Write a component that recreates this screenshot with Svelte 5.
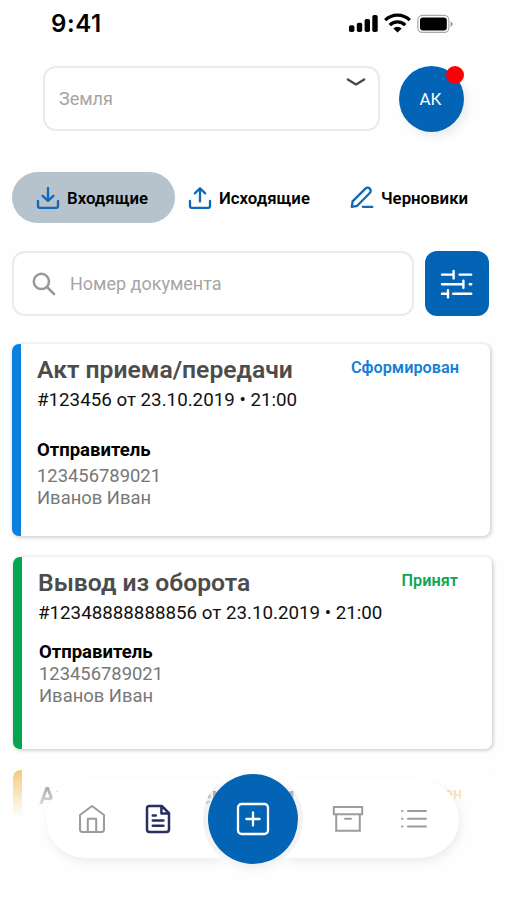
<script>
	const tabs = [
		{ id: "inbox", label: "Входящие" },
		{ id: "outbox", label: "Исходящие" },
		{ id: "drafts", label: "Черновики" },
	];

	const documents = [
		{
			title: "Акт приема/передачи",
			info: "#123456 от 23.10.2019 • 21:00",
			status: "Сформирован",
			kind: "formed",
			code: "123456789021",
			sender: "Иванов Иван",
		},
		{
			title: "Вывод из оборота",
			info: "#12348888888856 от 23.10.2019 • 21:00",
			status: "Принят",
			kind: "accepted",
			code: "123456789021",
			sender: "Иванов Иван",
		},
		{
			title: "Акт приема/передачи",
			status: "Отклонен",
			kind: "declined",
		},
	];

	let currentTab = $state("inbox");
	let query = $state("");
</script>

<div class="screen">
	<div class="statusbar">
		<span class="time">9:41</span>
		<svg class="system" width="106" height="22" viewBox="0 0 106 22">
			<rect x="1" y="14.2" width="5.4" height="6.8" rx="1.8" />
			<rect x="8.8" y="11.8" width="5.4" height="9.2" rx="1.8" />
			<rect x="16.6" y="8" width="5.4" height="13" rx="1.8" />
			<rect x="24.3" y="4" width="5.4" height="17" rx="1.8" />
			<g fill="none" stroke="#000" stroke-width="3.3">
				<path d="M37.2 9.2a17.5 17.5 0 0 1 24.6 0" />
				<path d="M41.8 14.2a10.8 10.8 0 0 1 15.4 0" />
			</g>
			<path d="M49.5 21.6l-4.2-4.2a6.2 6.2 0 0 1 8.4 0z" />
			<rect x="69.9" y="4.4" width="31" height="17" rx="4.6" fill="none" stroke="#aaa" stroke-width="1.2" />
			<rect x="72" y="6.5" width="26.8" height="12.9" rx="3" />
			<path d="M102.6 10.6c2.6.8 2.6 4.4 0 5.2z" fill="#999" />
		</svg>
	</div>

	<header>
		<button class="select">
			<span>Земля</span>
			<svg width="20" height="10" viewBox="0 0 20 10">
				<path d="M1.8 2.4L10 7.4L18.2 2.4" fill="none" stroke="#484848" stroke-width="2.3" stroke-linecap="round" stroke-linejoin="round" />
			</svg>
		</button>
		<div class="avatar">
			АК
			<i class="badge"></i>
		</div>
	</header>

	<nav class="tabs">
		{#each tabs as tab}
			<button class="tab {tab.id}" class:active={currentTab === tab.id} onclick={() => (currentTab = tab.id)}>
				<svg width="24" height="24" viewBox="0 0 24 24">
					{#if tab.id === "inbox"}
						<path d="M2 15v5q0 1.8 1.8 1.8h16.4q1.8 0 1.8-1.8V15M12 2v12.6M6.6 9.8L12 14.8l5.4-5" />
					{:else if tab.id === "outbox"}
						<path d="M2 15v5q0 1.8 1.8 1.8h16.4q1.8 0 1.8-1.8V15M12 15.5V2.4M6.8 7.4L12 2.2l5.2 5.2" />
					{:else}
						<path d="M1.8 20.8l.8-5.4L15.4 2.6a3.1 3.1 0 0 1 4.4 4.4L7.2 19.8zM12.8 20.8h9.6" />
					{/if}
				</svg>
				{tab.label}
			</button>
		{/each}
	</nav>

	<div class="search">
		<label>
			<svg width="24" height="24" viewBox="0 0 24 24">
				<circle cx="9.4" cy="9.4" r="7.6" />
				<path d="M15 15l7 7" />
			</svg>
			<input type="text" placeholder="Номер документа" bind:value={query} />
		</label>
		<button class="filter" aria-label="Фильтр">
			<svg width="34" height="30" viewBox="0 0 34 30">
				<path d="M2 5.6h11.5M13.6 2v7.4M19.6 5.6H31.2M2 15.2h21.4M23.4 11.6v7.2M29.8 15.2h1.4M2 24.8h5M8 21.2v7.2M13.2 24.8h18" />
			</svg>
		</button>
	</div>

	<main>
		{#each documents as doc}
			<article class={doc.kind}>
				<div class="top">
					<h2>{doc.title}</h2>
					<span class="status">{doc.status}</span>
				</div>
				{#if doc.info}
					<p class="info">{doc.info}</p>
					<h3>Отправитель</h3>
					<p class="sender">{doc.code}</p>
					<p class="sender">{doc.sender}</p>
				{/if}
			</article>
		{/each}
	</main>

	<footer>
		<div class="bar">
			<svg class="home" width="28" height="30" viewBox="0 0 28 30">
				<path d="M2 11L14 2l12 9v14.6q0 2.4-2.4 2.4H4.4Q2 28 2 25.6zM9.8 28V14.8h8.4V28" />
			</svg>
			<svg class="file" width="26" height="30" viewBox="0 0 26 30">
				<path d="M4.4 2h12.4L24 9.2v16.4q0 2.4-2.4 2.4H4.4Q2 28 2 25.6V4.4Q2 2 4.4 2zM16.4 2.4v7.2h7.2M7.8 11.4h3M7.8 16.6h10.6M7.8 21.8h10.6" />
			</svg>
			<span class="space"></span>
			<svg class="archive" width="32" height="28" viewBox="0 0 32 28">
				<path d="M1.8 2h28.4v7.2H1.8zM4.2 9.2v16.6h23.6V9.2M13 13.8h6" />
			</svg>
			<svg class="list" width="28" height="20" viewBox="0 0 28 20">
				<path d="M2 2h.4M8 2h18M2 9.8h.4M8 9.8h18M2 17.6h.4M8 17.6h18" />
			</svg>
		</div>
		<button class="add" aria-label="Добавить">
			<svg width="34" height="34" viewBox="0 0 34 34">
				<rect x="2" y="2" width="30" height="30" rx="3.6" />
				<path d="M17 10.4v13.2M10.4 17h13.2" />
			</svg>
		</button>
	</footer>
</div>

<style>
	:global(body) {
		background: #fefefe;
	}
	.screen {
		position: relative;
		width: 507px;
		height: 900px;
		overflow: hidden;
		box-sizing: border-box;
		font-family: Roboto, "Liberation Sans", sans-serif;
		color: #000;
	}
	svg {
		display: block;
		flex: none;
	}
	button {
		font: inherit;
		color: inherit;
		border: 0;
		padding: 0;
		background: none;
		cursor: pointer;
	}
	h2, h3, p {
		margin: 0;
	}
	.statusbar {
		display: flex;
		justify-content: space-between;
		height: 66px;
		padding: 11px 53px 0 51px;
		box-sizing: border-box;
	}
	.time {
		font: 600 24px/26px Inter, sans-serif;
		letter-spacing: 0.6px;
	}
	header {
		display: flex;
		gap: 19px;
		padding-left: 43px;
	}
	.select {
		display: flex;
		justify-content: space-between;
		width: 337px;
		height: 65px;
		box-sizing: border-box;
		border: 2px solid #eaeaea;
		border-radius: 13px;
		padding: 9px 12px 0 14px;
		background: #fff;
		font-size: 18px;
		color: #a5a5a5;
	}
	.select span {
		line-height: 43px;
	}
	.avatar {
		position: relative;
		width: 65px;
		height: 66px;
		border-radius: 50%;
		background: #0364b5;
		box-shadow: 4px 5px 9px rgba(0, 0, 0, 0.07);
		color: #fff;
		font-size: 17px;
		line-height: 67px;
		text-align: center;
		text-indent: -2px;
	}
	.badge {
		position: absolute;
		top: 0;
		right: 0;
		width: 18px;
		height: 18px;
		border-radius: 50%;
		background: #fb0007;
	}
	.tabs {
		display: flex;
		height: 51px;
		margin: 40px 0 0 12px;
		font-size: 16.8px;
		font-weight: 600;
	}
	.tab {
		display: flex;
		align-items: center;
		gap: 7px;
		box-sizing: border-box;
	}
	.tab svg {
		fill: none;
		stroke: #1069b7;
		stroke-width: 2.3;
		stroke-linecap: round;
		stroke-linejoin: round;
	}
	.inbox {
		width: 163px;
		padding-left: 24px;
		border-radius: 26px;
	}
	.outbox {
		width: 161px;
		padding-left: 13px;
	}
	.drafts {
		padding-left: 14px;
	}
	.active {
		background: #b6c3cc;
	}
	.search {
		display: flex;
		gap: 11px;
		margin: 28px 0 0 12px;
	}
	.search label {
		display: flex;
		align-items: center;
		gap: 14px;
		width: 402px;
		height: 65px;
		padding-left: 18px;
		box-sizing: border-box;
		border: 2px solid #eaeaea;
		border-radius: 13px;
		background: #fff;
	}
	.search label svg {
		fill: none;
		stroke: #999;
		stroke-width: 2.5;
		stroke-linecap: round;
	}
	input {
		width: 300px;
		border: 0;
		padding: 0;
		outline: 0;
		font: 18px Roboto, sans-serif;
		background: none;
	}
	input::placeholder {
		color: #a5a5a5;
	}
	.filter {
		display: flex;
		align-items: center;
		justify-content: center;
		width: 64px;
		height: 65px;
		border-radius: 12px;
		background: #0364b5;
	}
	.filter svg {
		fill: none;
		stroke: #fff;
		stroke-width: 2.4;
		stroke-linecap: round;
	}
	main {
		display: flex;
		flex-direction: column;
		gap: 21px;
		padding: 28px 0 0 12px;
	}
	article {
		flex: none;
		width: 478px;
		height: 192px;
		box-sizing: border-box;
		border-left: 9px solid;
		border-radius: 7px;
		padding: 11px 31px 0 16px;
		background: #fff;
		box-shadow: 1px 1px 4px rgba(0, 0, 0, 0.24);
	}
	.formed {
		border-color: #0a80df;
	}
	.accepted, .declined {
		margin-left: 1px;
		padding-left: 17px;
		padding-right: 34px;
		width: 479px;
	}
	.accepted {
		border-color: #05a650;
	}
	.declined {
		padding-right: 30px;
		border-color: #f5b851;
		mask-image: linear-gradient(rgba(0, 0, 0, 0.75), transparent 46px);
	}
	.top {
		display: flex;
		justify-content: space-between;
	}
	h2 {
		font-size: 24.7px;
		line-height: 30px;
		font-weight: 600;
		color: #4c4c4c;
	}
	.accepted h2 {
		margin-left: -1px;
	}
	.status {
		font-size: 16.3px;
		line-height: 25px;
		font-weight: 600;
	}
	.formed .status {
		color: #1480d5;
	}
	.accepted .status {
		color: #12a554;
	}
	.declined .status {
		color: #f5b851;
	}
	.info {
		font-size: 18.75px;
		line-height: 30px;
		color: #111;
	}
	.accepted .info {
		margin-left: -1px;
	}
	h3 {
		margin-top: 23px;
		font-size: 18.5px;
		line-height: 24px;
		font-weight: 700;
	}
	.sender {
		font-size: 18.4px;
		line-height: 22px;
		color: #777;
	}
	.formed h3 + .sender {
		margin-top: 3px;
	}
	.accepted h3 {
		margin-top: 12px;
	}
	.accepted h3 + .sender {
		margin-top: -1px;
	}
	/* floats over the end of the list */
	footer {
		position: absolute;
		left: 46px;
		top: 774px;
		width: 413px;
		height: 90px;
		display: flex;
		justify-content: center;
		align-items: center;
		filter: drop-shadow(2px 4px 5px rgba(0, 0, 0, 0.07));
	}
	.bar {
		display: flex;
		align-items: center;
		width: 413px;
		height: 78px;
		box-sizing: border-box;
		padding-left: 32px;
		border-radius: 39px;
		background: #fff;
		mask-image: radial-gradient(circle at 207px 39px, transparent 49.5px, #000 50.5px);
	}
	.bar svg {
		fill: none;
		stroke: #9c9c9c;
		stroke-width: 2;
		stroke-linejoin: round;
		stroke-linecap: round;
	}
	.bar .file {
		margin-left: 39px;
		stroke: #273060;
		stroke-width: 2.5;
	}
	.space {
		width: 161px;
	}
	.bar .archive {
		stroke-linejoin: miter;
	}
	.list {
		margin-left: 36px;
	}
	.add {
		position: absolute;
		left: 162px;
		top: 0;
		display: flex;
		align-items: center;
		justify-content: center;
		width: 90px;
		height: 90px;
		border-radius: 50%;
		background: #0364b5;
	}
	.add svg {
		fill: none;
		stroke: #fff;
		stroke-width: 2.3;
		stroke-linecap: round;
	}
</style>
